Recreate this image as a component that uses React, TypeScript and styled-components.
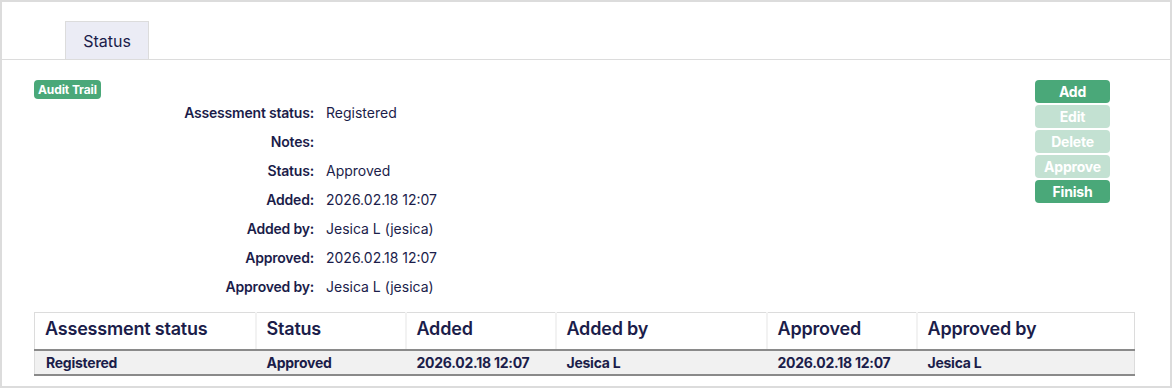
import React from "react";
import styled, { createGlobalStyle } from "styled-components";

const Global = createGlobalStyle`
  html, body { margin: 0; padding: 0; background: #fff; }
  body { font-family: Inter, "Noto Sans", sans-serif; color: #1b1d4a; }
  * { box-sizing: border-box; }
`;

const Frame = styled.div`
  width: 1172px;
  height: 388px;
  border: 2px solid #dcdcdc;
  display: flex;
  flex-direction: column;
`;

const TabBar = styled.div`
  display: flex;
  padding: 19px 0 0 63px;
  border-bottom: 1px solid #dcdcdc;
`;

const Tab = styled.div`
  width: 84px;
  height: 38px;
  background: #ebecf5;
  border: 1px solid #dcdcdc;
  border-bottom: none;
  display: flex;
  align-items: center;
  justify-content: center;
  font-size: 16px;
  color: #1b1d4a;
`;

const Content = styled.div`
  padding: 20px 36px 0 32px;
  display: flex;
  flex-direction: column;
`;

const Top = styled.div`
  display: flex;
  justify-content: space-between;
  padding-right: 24px;
`;

const Left = styled.div`
  display: flex;
  flex-direction: column;
  align-items: flex-start;
`;

const Badge = styled.span`
  height: 19px;
  padding: 0 4px;
  background: #4aa879;
  color: #fff;
  font-size: 12px;
  font-weight: 700;
  letter-spacing: -0.1px;
  border-radius: 4px;
  display: inline-flex;
  align-items: center;
`;

const Details = styled.div`
  display: grid;
  grid-template-columns: 280px auto;
  column-gap: 12px;
  grid-auto-rows: 29px;
  margin-top: -1px;
`;

const Label = styled.div`
  font-size: 14px;
  font-weight: 600;
  letter-spacing: -0.2px;
  display: flex;
  align-items: center;
  justify-content: flex-end;
`;

const Value = styled.div`
  font-size: 14px;
  display: flex;
  align-items: center;
`;

const Buttons = styled.div`
  display: flex;
  flex-direction: column;
  gap: 2px;
  width: 75px;
`;

const Btn = styled.button<{ $disabled?: boolean }>`
  height: 23px;
  border: none;
  border-radius: 4px;
  background: ${(p) => (p.$disabled ? "#c3e1d2" : "#4aa879")};
  color: #fff;
  font-family: Inter, "Noto Sans", sans-serif;
  font-size: 14px;
  font-weight: 700;
  letter-spacing: -0.2px;
  padding: 0;
  cursor: pointer;
`;

const Table = styled.table`
  margin-top: 11px;
  width: 1100px;
  border-collapse: collapse;
  table-layout: fixed;
  border: 1px solid #dcdcdc;
  border-bottom: 2px solid #8a8a8a;
`;

const Th = styled.th<{ $last?: boolean }>`
  text-align: left;
  font-size: 18px;
  font-weight: 600;
  letter-spacing: -0.2px;
  height: 37px;
  padding: 0 11px 5px 10px;
  border-right: ${(p) => (p.$last ? "none" : "2px solid #f2f2f2")};
  border-bottom: 2px solid #8a8a8a;
  white-space: nowrap;
`;

const Td = styled.td`
  background: #f1f1f1;
  font-size: 14px;
  font-weight: 700;
  letter-spacing: -0.25px;
  height: 25px;
  padding: 0 11px;
  white-space: nowrap;
`;

const details: [string, string][] = [
  ["Assessment status:", "Registered"],
  ["Notes:", ""],
  ["Status:", "Approved"],
  ["Added:", "2026.02.18 12:07"],
  ["Added by:", "Jesica L (jesica)"],
  ["Approved:", "2026.02.18 12:07"],
  ["Approved by:", "Jesica L (jesica)"],
];

const cols: [string, number][] = [
  ["Assessment status", 221],
  ["Status", 150],
  ["Added", 150],
  ["Added by", 211],
  ["Approved", 150],
  ["Approved by", 218],
];

const row = ["Registered", "Approved", "2026.02.18 12:07", "Jesica L", "2026.02.18 12:07", "Jesica L"];

export default function App() {
  return (
    <>
      <Global />
      <Frame>
        <TabBar>
          <Tab>Status</Tab>
        </TabBar>
        <Content>
          <Top>
            <Left>
              <Badge>Audit Trail</Badge>
              <Details>
                {details.map(([l, v]) => (
                  <React.Fragment key={l}>
                    <Label>{l}</Label>
                    <Value>{v}</Value>
                  </React.Fragment>
                ))}
              </Details>
            </Left>
            <Buttons>
              <Btn>Add</Btn>
              <Btn $disabled>Edit</Btn>
              <Btn $disabled>Delete</Btn>
              <Btn $disabled>Approve</Btn>
              <Btn>Finish</Btn>
            </Buttons>
          </Top>
          <Table>
            <colgroup>
              {cols.map(([c, w]) => (
                <col key={c} style={{ width: w }} />
              ))}
            </colgroup>
            <thead>
              <tr>
                {cols.map(([c], i) => (
                  <Th key={c} $last={i === cols.length - 1}>{c}</Th>
                ))}
              </tr>
            </thead>
            <tbody>
              <tr>
                {row.map((v, i) => (
                  <Td key={i}>{v}</Td>
                ))}
              </tr>
            </tbody>
          </Table>
        </Content>
      </Frame>
    </>
  );
}
